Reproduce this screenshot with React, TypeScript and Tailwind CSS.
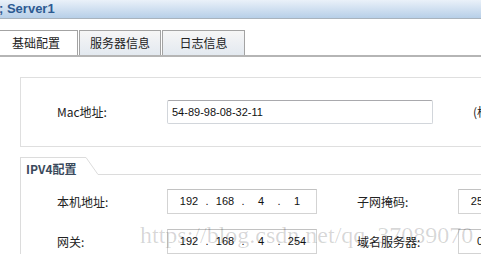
// Server1 — basic config panel (IP / MAC settings)

const CJK = "font-['Noto_Sans_CJK_SC','Noto_Sans',sans-serif]";
const LATIN = "font-['Liberation_Sans',Arial,sans-serif]";

const TABS = [
  { label: "基础配置", width: "w-[84px]", active: true },
  { label: "服务器信息", width: "w-[82px]", active: false },
  { label: "日志信息", width: "w-[83px]", active: false },
];

function IpInput({ value, width }: { value: string; width: string }) {
  const parts = value.split(".");
  return (
    <div
      className={`${width} h-[25px] shrink-0 flex items-center pl-[7px] border border-[#d3d3d3] border-t-[#c2c2c2] bg-white ${LATIN} text-[11px] text-[#111]`}
    >
      {parts.map((p, i) => (
        <div key={i} className="flex items-center">
          {i > 0 && <span className="w-[8px] text-center">.</span>}
          <span className="w-[28px] text-center">{p}</span>
        </div>
      ))}
    </div>
  );
}

export default function App() {
  return (
    <div className={`relative w-[481px] h-[254px] overflow-hidden bg-white ${CJK} text-[12px] text-[#222]`}>
      {/* Title bar */}
      <div className="h-[19px] flex items-center border-b border-[#a9b3bd] bg-linear-to-b from-[#eaf1f9] to-[#b7cfe8]">
        <span className={`${LATIN} font-bold text-[13px] text-[#2c5a92] -ml-[1px] whitespace-pre`}>; Server1</span>
      </div>

      {/* Tabs */}
      <div className="mt-[11px] flex gap-[1px] -ml-[6px] border-b-2 border-[#b5b5b5] w-[500px]">
        {TABS.map((t) => (
          <div
            key={t.label}
            className={`${t.width} h-[25px] flex items-center justify-center border border-b-0 border-[#a3a3a3] ${
              t.active ? "bg-white" : "bg-linear-to-b from-[#f6f6f6] to-[#e3e9f0]"
            }`}
          >
            {t.label}
          </div>
        ))}
      </div>

      {/* MAC */}
      <div className="mt-[20px] ml-[20px] w-[600px] h-[70px] flex items-center border border-[#dfdfdf] pl-[36px]">
        <div className="w-[110px] shrink-0">Mac地址:</div>
        <div
          className={`w-[266px] h-[24px] shrink-0 flex items-center pl-[4px] rounded-[2px] border border-[#d2d6db] border-t-[#a9a9ad] ${LATIN} text-[11px] text-[#111]`}
        >
          54-89-98-08-32-11
        </div>
        <div className="ml-[40px] whitespace-nowrap">(格式：XX-XX-XX-XX-XX-XX)</div>
      </div>

      {/* IPV4 */}
      <div className="mt-[10px] ml-[20px] w-[600px] border-l border-[#dcdcdc]">
        <div className="flex h-[18px]">
          <div className={`w-[65px] border-t border-[#dcdcdc] pl-[5px] pt-[4px] leading-[14px] font-bold text-[12px] text-[#3b4a5c]`}>
            IPV4配置
          </div>
          <svg width="12" height="18" viewBox="0 0 12 18" className="shrink-0">
            <line x1="0" y1="0.5" x2="12" y2="17.5" stroke="#dcdcdc" strokeWidth="1" />
          </svg>
          <div className="flex-1 border-b border-[#dcdcdc]" />
        </div>

        <div className="pt-[14px] pl-[36px] flex flex-col gap-[15px]">
          <div className="flex items-center">
            <div className="w-[110px] shrink-0">本机地址:</div>
            <IpInput value="192.168.4.1" width="w-[150px]" />
            <div className="ml-[40px] w-[101px] shrink-0">子网掩码:</div>
            <IpInput value="255.255.255.0" width="w-[150px]" />
          </div>
          <div className="flex items-center">
            <div className="w-[110px] shrink-0">网关:</div>
            <IpInput value="192.168.4.254" width="w-[150px]" />
            <div className="ml-[40px] w-[101px] shrink-0">域名服务器:</div>
            <IpInput value="0.0.0.0" width="w-[150px]" />
          </div>
        </div>
      </div>

      {/* Watermark */}
      <div className="pointer-events-none absolute left-[140px] top-[223px] font-['Liberation_Serif',serif] text-[24px] leading-[24px] text-black/[0.16] whitespace-nowrap">
        https://blog.csdn.net/qq_37089070
      </div>
    </div>
  );
}
